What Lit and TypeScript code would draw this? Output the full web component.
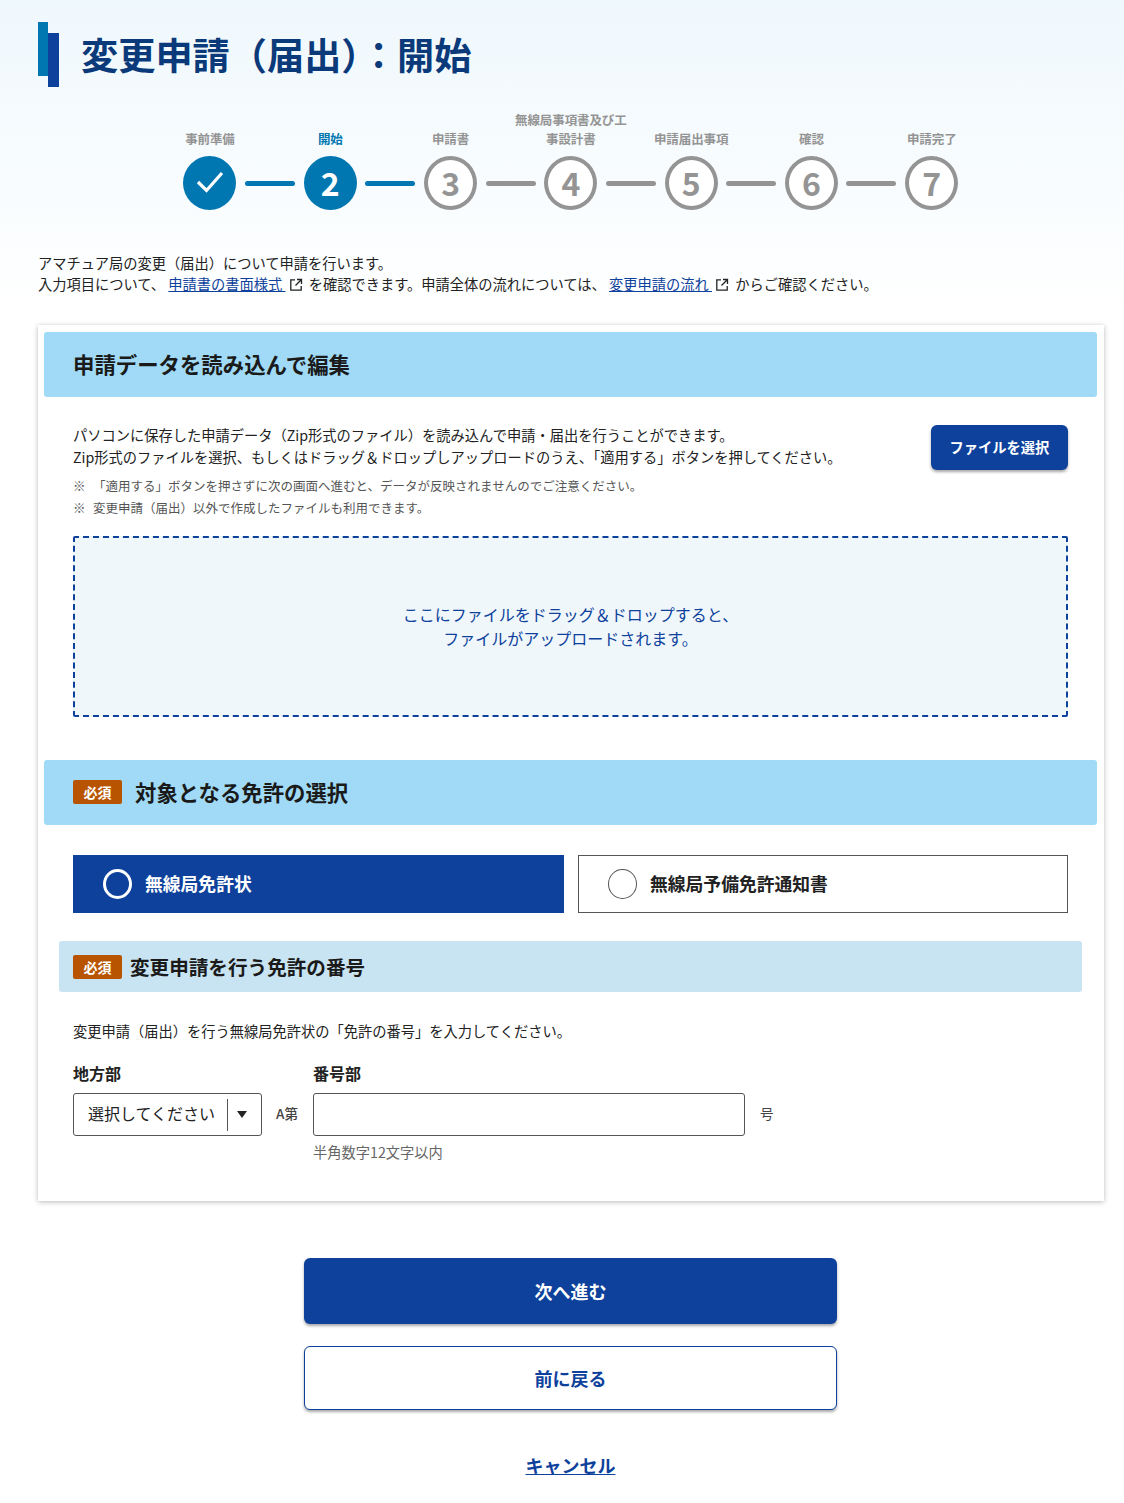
import { LitElement, html, css, svg } from "lit";
import { customElement } from "lit/decorators.js";

const STEPS = [
  { label: "事前準備", state: "done", n: "" },
  { label: "開始", state: "current", n: "2" },
  { label: "申請書", state: "todo", n: "3" },
  { label: "無線局事項書及び工事設計書", state: "todo", n: "4" },
  { label: "申請届出事項", state: "todo", n: "5" },
  { label: "確認", state: "todo", n: "6" },
  { label: "申請完了", state: "todo", n: "7" },
];

const extIcon = html`<svg class="ext" viewBox="0 0 14 14" width="14" height="14" fill="none" stroke="#222" stroke-width="1.3"><path d="M6 1.8H1.8v10.4h10.4V8"/><path d="M8 1.5h4.5V6M12.3 1.7L6.5 7.5"/></svg>`;

@customElement("app-root")
export class AppRoot extends LitElement {
  static styles = css`
    :host {
      display: block;
      width: 1124px;
      height: 1503px;
      overflow: hidden;
      box-sizing: border-box;
      padding: 22px 20px 0 38px;
      font-family: "Noto Sans CJK JP", "Noto Sans", sans-serif;
      color: #222;
      background: linear-gradient(#eff8fd 0, #ffffff 310px);
    }
    * { box-sizing: border-box; }
    .title { display: flex; align-items: center; gap: 22px; height: 65px; }
    .bar { width: 21px; height: 65px; position: relative; flex: none; }
    .bar-a, .bar-b { display: block; position: absolute; }
    .bar-a { left: 0; top: 0; width: 10px; height: 54px; background: #0077b0; }
    .bar-b { left: 10px; top: 11px; width: 11px; height: 54px; background: #0d419b; }
    h1 { margin: 0; padding-top: 1px; font-size: 37.2px; line-height: 1; font-weight: 700; color: #0a3a7a; }
    .stepper { display: grid; grid-template-columns: repeat(7, 120.3px); margin: 21px 0 0 111.85px; height: 102px; }
    .step { position: relative; display: flex; flex-direction: column; justify-content: flex-end; align-items: center; height: 102px; }
    .step-label { font-size: 12.5px; line-height: 19px; font-weight: 700; color: #949494; text-align: center; width: 118px; margin-bottom: 8px; letter-spacing: -0.1px; }
    .step.current .step-label { color: #0077b0; }
    .circle { width: 53px; height: 54px; border-radius: 50%; display: flex; align-items: center; justify-content: center; border: 4px solid #949494; background: #fff; color: #949494; font-size: 32px; font-weight: 700; line-height: 1; padding-bottom: 2px; }
    .step.done .circle, .step.current .circle { background: #0077b0; border-color: #0077b0; color: #fff; }
    .link-line { position: absolute; left: calc(50% + 35px); bottom: 24.5px; width: 50px; height: 5px; border-radius: 3px; background: #949494; }
    .link-line.on { background: #0077b0; }
    .intro { margin: 42px 0 0; font-size: 14.25px; line-height: 21px; white-space: nowrap; }
    .intro a, .link { color: #0d419b; text-decoration: underline; }
    .ext { vertical-align: -2px; margin: 0 3px 0 3px; }
    .card { margin-top: 31px; height: 876px; width: 1066px; background: #fff; padding: 7px 7px 7px 6px; box-shadow: 0 1px 5px rgba(0,0,0,.28); }
    .sec-head { height: 65px; border-radius: 3px; background: #a0daf6; display: flex; align-items: center; padding: 0 0 2px 29px; gap: 13px; font-size: 21.4px; font-weight: 700; color: #1a1a1a; }
    .badge { flex: none; width: 49px; height: 24px; border-radius: 2px; background: #b85400; color: #fff; font-size: 14px; font-weight: 700; display: flex; align-items: center; justify-content: center; }
    .body { padding: 28px 29px 0; }
    .upload-top { display: flex; justify-content: space-between; align-items: flex-start; }
    .lead { font-size: 14.25px; line-height: 22px; margin-top: -1px; white-space: nowrap; }
    .note { font-size: 12.5px; line-height: 22px; color: #555; white-space: nowrap; }
    .mark { display: inline-block; width: 20px; }
    .notes { margin-top: 7px; }
    .btn-file { width: 137px; height: 45px; flex: none; border-radius: 6px; background: #0d419b; color: #fff; font-weight: 700; font-size: 14.25px; display: flex; align-items: center; justify-content: center; padding: 0 0 3px; box-shadow: 0 2px 3px rgba(0,0,0,.35); font-family: inherit; border: 0; }
    .drop { margin-top: 17px; height: 181px; background: #eff7fb; border: 2px dashed #0d419b; border-radius: 2px; display: flex; align-items: center; justify-content: center; text-align: center; color: #0d419b; font-size: 16px; line-height: 24px; padding-bottom: 2px; }
    .sec2 { margin-top: 43px; }
    .radios { display: grid; grid-template-columns: 491px 490px; gap: 14px; padding: 30px 29px 0; }
    .radio { height: 58px; display: flex; align-items: center; padding: 0 0 2px 29px; gap: 13px; font-size: 17.8px; font-weight: 700; border: 1px solid #555; color: #222; background: #fff; }
    .radio.on { background: #0d419b; border-color: #0d419b; color: #fff; }
    .dot { width: 29px; height: 30px; margin-top: 2px; border-radius: 50%; border: 1.5px solid #555; background: #fff; flex: none; }
    .radio.on .dot { background: transparent; border: 3px solid #fff; }
    .sub-head { margin: 28px 15px 0; height: 51px; border-radius: 3px; background: #c8e3f1; display: flex; align-items: center; padding-left: 14px; gap: 8px; font-size: 19.6px; font-weight: 700; color: #1a1a1a; }
    .num { padding: 28px 29px 0; }
    .num-lead { font-size: 14.25px; line-height: 22px; }
    .fields { display: grid; grid-template-columns: 189px 51px 432px auto; margin-top: 19px; align-items: center; }
    .f-label { font-size: 16px; line-height: 24px; font-weight: 700; height: 32px; }
    .select { height: 43px; border: 1px solid #555; border-radius: 3px; background: #fff; display: flex; align-items: center; padding: 0 0 3px 14px; font-size: 16px; }
    .select .txt { width: 139px; white-space: nowrap; }
    .select .sep { width: 1px; height: 32px; margin-top: 3px; background: #555; }
    .select .tri { margin: 3px 0 0 9px; width: 0; height: 0; border-left: 5.5px solid transparent; border-right: 5.5px solid transparent; border-top: 7px solid #222; }
    .unit { font-size: 13.5px; color: #444; padding-bottom: 4px; }
    .unit.a { padding-left: 14px; font-weight: 500; }
    .unit.g { padding-left: 15px; }
    .input { height: 43px; border: 1px solid #555; border-radius: 3px; background: #fff; }
    .hint { grid-column: 3; font-size: 14.25px; line-height: 20px; color: #666; margin-top: 6px; }
    .actions { display: flex; flex-direction: column; align-items: center; width: 1065px; margin-top: 57px; }
    .btn { width: 533px; border-radius: 6px; display: flex; align-items: center; justify-content: center; font-size: 18px; font-weight: 700; font-family: inherit; box-shadow: 0 2px 3px rgba(0,0,0,.35); }
    .btn.primary { height: 66px; background: #0d419b; color: #fff; border: 0; }
    .btn.second { height: 64px; margin-top: 22px; background: #fff; color: #0d419b; border: 1px solid #0d419b; }
    .cancel { margin-top: 41px; font-size: 18px; line-height: 28px; font-weight: 700; }
  `;

  render() {
    return html`
      <div class="title">
        <div class="bar"><span class="bar-a"></span><span class="bar-b"></span></div>
        <h1>変更申請（届出）：開始</h1>
      </div>
      <div class="stepper">
        ${STEPS.map((s, i) => html`
          <div class="step ${s.state}">
            <div class="step-label">${s.label}</div>
            <div class="circle">
              ${s.state === "done"
                ? html`<svg width="28" height="22" viewBox="0 0 28 22" fill="none" stroke="#fff" stroke-width="3.2">${svg`<path d="M2 11l8.5 8.5L26 2"/>`}</svg>`
                : s.n}
            </div>
            ${i < 6 ? html`<div class="link-line ${i < 2 ? "on" : ""}"></div>` : ""}
          </div>`)}
      </div>
      <p class="intro">
        アマチュア局の変更（届出）について申請を行います。<br />
        入力項目について、 <a href="#">申請書の書面様式 </a>${extIcon} を確認できます。申請全体の流れについては、 <a href="#">変更申請の流れ </a>${extIcon} からご確認ください。
      </p>
      <div class="card">
        <div class="sec-head">申請データを読み込んで編集</div>
        <div class="body">
          <div class="upload-top">
            <div>
              <div class="lead">パソコンに保存した申請データ（Zip形式のファイル）を読み込んで申請・届出を行うことができます。<br />Zip形式のファイルを選択、もしくはドラッグ＆ドロップしアップロードのうえ、「適用する」ボタンを押してください。</div>
              <div class="notes">
                <div class="note"><span class="mark">※</span>「適用する」ボタンを押さずに次の画面へ進むと、データが反映されませんのでご注意ください。</div>
                <div class="note"><span class="mark">※</span>変更申請（届出）以外で作成したファイルも利用できます。</div>
              </div>
            </div>
            <button class="btn-file">ファイルを選択</button>
          </div>
          <div class="drop"><div>ここにファイルをドラッグ＆ドロップすると、<br />ファイルがアップロードされます。</div></div>
        </div>
        <div class="sec-head sec2"><span class="badge">必須</span>対象となる免許の選択</div>
        <div class="radios">
          <div class="radio on"><span class="dot"></span>無線局免許状</div>
          <div class="radio"><span class="dot"></span>無線局予備免許通知書</div>
        </div>
        <div class="sub-head"><span class="badge">必須</span>変更申請を行う免許の番号</div>
        <div class="num">
          <div class="num-lead">変更申請（届出）を行う無線局免許状の「免許の番号」を入力してください。</div>
          <div class="fields">
            <div class="f-label">地方部</div><div></div><div class="f-label">番号部</div><div></div>
            <div class="select"><span class="txt">選択してください</span><span class="sep"></span><span class="tri"></span></div>
            <div class="unit a">A第</div>
            <div class="input"></div>
            <div class="unit g">号</div>
            <div class="hint">半角数字12文字以内</div>
          </div>
        </div>
      </div>
      <div class="actions">
        <button class="btn primary">次へ進む</button>
        <button class="btn second">前に戻る</button>
        <a class="link cancel" href="#">キャンセル</a>
      </div>
    `;
  }
}
